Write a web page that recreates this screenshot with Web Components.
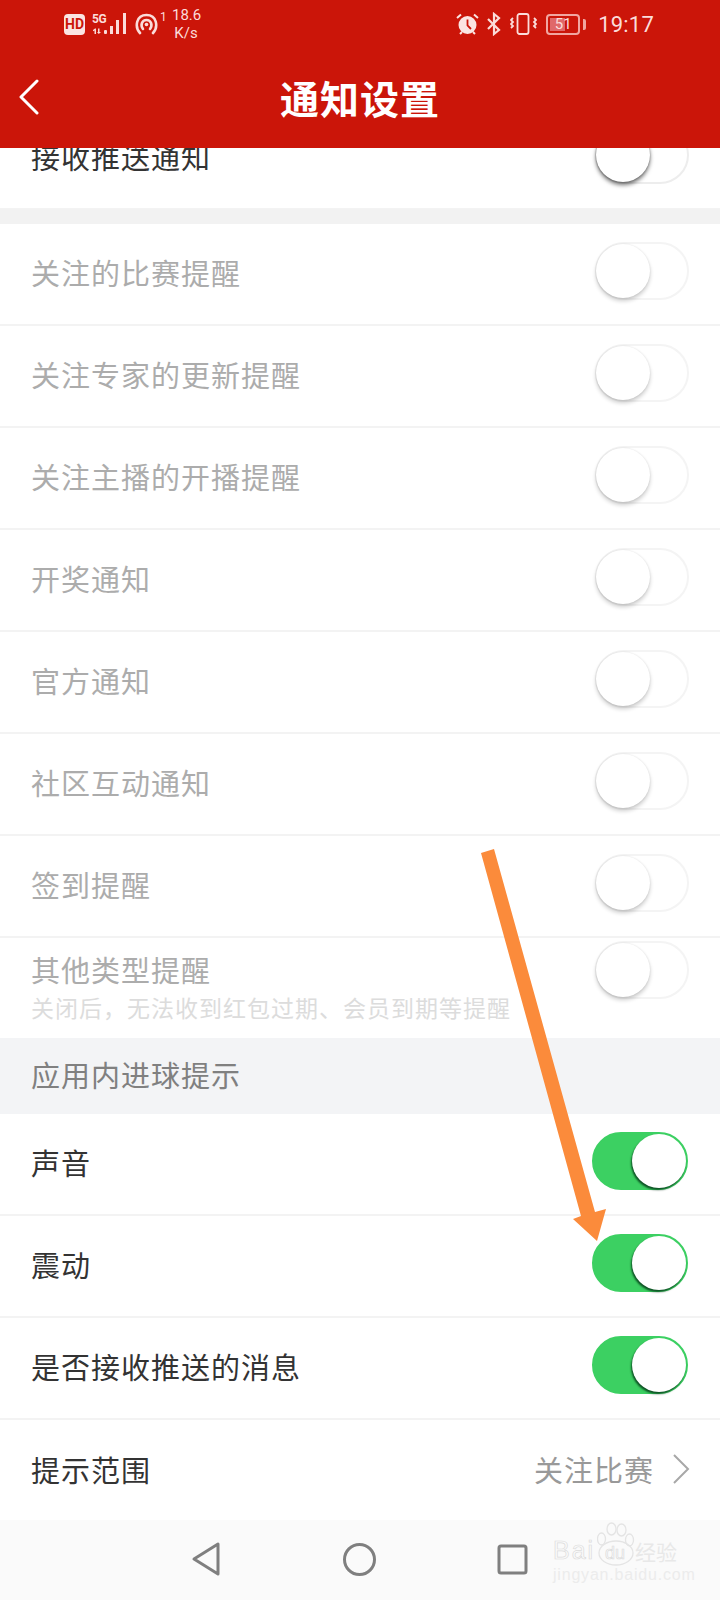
<!DOCTYPE html>
<html lang="zh">
<head>
<meta charset="utf-8">
<title>通知设置</title>
<style>
    html, body {
        margin: 0;
        padding: 0;
        background: #fff;
    }
    body {
        width: 720px;
        height: 1600px;
        overflow: hidden;
        font-family: "Noto Sans CJK SC", "Noto Sans", sans-serif;
    }
</style>
</head>
<body>
<notice-page>
    <status-bar slot="top"></status-bar>
    <app-header slot="top">通知设置</app-header>

    <clip-row>
        <setting-row>接收推送通知<toggle-switch slot="end"></toggle-switch></setting-row>
    </clip-row>
    <gap-bar></gap-bar>
    <setting-row muted>关注的比赛提醒<toggle-switch slot="end" dim></toggle-switch></setting-row>
    <setting-row muted>关注专家的更新提醒<toggle-switch slot="end" dim></toggle-switch></setting-row>
    <setting-row muted>关注主播的开播提醒<toggle-switch slot="end" dim></toggle-switch></setting-row>
    <setting-row muted>开奖通知<toggle-switch slot="end" dim></toggle-switch></setting-row>
    <setting-row muted>官方通知<toggle-switch slot="end" dim></toggle-switch></setting-row>
    <setting-row muted>社区互动通知<toggle-switch slot="end" dim></toggle-switch></setting-row>
    <setting-row muted>签到提醒<toggle-switch slot="end" dim></toggle-switch></setting-row>
    <setting-row muted flat stacked>其他类型提醒<span slot="sub">关闭后，无法收到红包过期、会员到期等提醒</span><toggle-switch slot="end" dim></toggle-switch></setting-row>
    <section-title>应用内进球提示</section-title>
    <setting-row>声音<toggle-switch slot="end" on></toggle-switch></setting-row>
    <setting-row>震动<toggle-switch slot="end" on></toggle-switch></setting-row>
    <setting-row>是否接收推送的消息<toggle-switch slot="end" on></toggle-switch></setting-row>
    <setting-row flat>提示范围<value-link slot="end">关注比赛</value-link></setting-row>

    <nav-bar slot="bottom"></nav-bar>
</notice-page>

<script>
const pageTemplate = document.createElement('template');
pageTemplate.innerHTML = `
    <style>
        :host {
            display: flex;
            flex-direction: column;
            position: relative;
            width: 720px;
            height: 1600px;
            overflow: hidden;
        }
        .top {
            display: block;
            position: relative;
            z-index: 2;
        }
        .list {
            flex: 1;
            min-height: 0;
            display: flex;
            flex-direction: column;
        }
        .arrow {
            position: absolute;
            left: 0;
            top: 0;
            z-index: 3;
            pointer-events: none;
        }
    </style>
    <div class="top"><slot name="top"></slot></div>
    <div class="list"><slot></slot></div>
    <slot name="bottom"></slot>
    <svg class="arrow" width="720" height="1600" viewBox="0 0 720 1600">
        <path d="M481 853 L494 849 L595 1212 L606 1209 L597 1241 L573 1219 L581 1216 Z" fill="#fb8b3b"/>
    </svg>
`;
class NoticePage extends HTMLElement {
    connectedCallback() {
        this.attachShadow({mode: 'open'}).appendChild(pageTemplate.content.cloneNode(true));
    }
}

const statusTemplate = document.createElement('template');
statusTemplate.innerHTML = `
    <style>
        :host {
            display: flex;
            align-items: center;
            height: 48px;
            padding-left: 64px;
            box-sizing: border-box;
            width: 720px;
            background: #cb1509;
            color: #fbdcda;
            font-family: "Roboto", "Noto Sans", sans-serif;
        }
        svg {
            display: block;
            flex: none;
        }
        .hd {
            width: 21px;
            height: 21px;
            background: #fbe4e2;
            color: #cb1509;
            border-radius: 4px;
            font: 700 14px/21px "Roboto", sans-serif;
            text-align: center;
            margin-right: 7px;
        }
        .sig {
            position: relative;
            width: 35px;
            height: 22px;
            margin-right: 8px;
        }
        .sig b {
            position: absolute;
            left: 0;
            top: 0;
            font: 700 12px/12px "Roboto", sans-serif;
            letter-spacing: -.5px;
        }
        .one {
            font-size: 12px;
            line-height: 12px;
            margin: -14px 8px 0 2px;
            width: 4px;
        }
        .speed {
            font-size: 15px;
            line-height: 18px;
            text-align: center;
            width: 28px;
        }
        .right {
            margin-left: auto;
            display: flex;
            align-items: center;
            padding-right: 66px;
        }
        .batt {
            position: relative;
            width: 34px;
            height: 21px;
            box-sizing: border-box;
            border: 2px solid #f1a6a1;
            border-radius: 4px;
            margin: 0 3px 0 9px;
            text-align: center;
            font-size: 15px;
            line-height: 17px;
            overflow: hidden;
        }
        .batt i {
            position: absolute;
            left: 2px;
            top: 2px;
            bottom: 2px;
            width: 15px;
            background: #e0686a;
        }
        .batt span {
            position: relative;
        }
        .nub {
            width: 3px;
            height: 11px;
            background: #f1a6a1;
            border-radius: 0 2px 2px 0;
            margin-right: 12px;
        }
        .time {
            font-size: 22px;
            letter-spacing: .2px;
        }
    </style>
    <div class="hd">HD</div>
    <div class="sig">
        <b>5G</b>
        <svg width="35" height="22" viewBox="0 0 35 22" fill="#fbdcda">
            <path d="M1 17l2-1.500h1V21H2.500V17.500L1 18.200zM6 15.500h1.500V19H9l-2.200 2L5 19h1z"/>
            <rect x="12" y="17" width="3" height="4" rx="1"/>
            <rect x="18" y="13" width="3" height="8"/>
            <rect x="24" y="7" width="3" height="14"/>
            <rect x="31" y="0" width="3" height="21"/>
        </svg>
    </div>
    <svg width="23" height="22" viewBox="0 0 23 22" fill="none" stroke="#fbdcda" stroke-width="2.600" stroke-linecap="round">
        <path d="M5 20C-.5 14 1 2 11.500 2S23.500 14 18 20"/>
        <path d="M8 16C5 12 7 7 11.500 7S18 12 15 16"/>
        <circle cx="11.500" cy="11.500" r="1.800" fill="#fbdcda" stroke="none"/>
    </svg>
    <span class="one">1</span>
    <div class="speed">18.6<br>K/s</div>
    <div class="right">
        <svg width="23" height="22" viewBox="0 0 23 22">
            <circle cx="11.500" cy="12" r="9" fill="#fbe4e2"/>
            <path d="M11.500 6.500V12.500L15 16" fill="none" stroke="#cb1509" stroke-width="1.800"/>
            <path d="M1 5L5 1.500M22 5L18 1.500M4 21l2-2M19 21l-2-2" stroke="#fbe4e2" stroke-width="2"/>
        </svg>
        <svg width="16" height="24" viewBox="0 0 16 24" style="margin-left:7px" fill="none" stroke="#fbdcda" stroke-width="2.200">
            <path d="M2 7L13 18L8 22V2L13 6L2 17"/>
        </svg>
        <svg width="27" height="22" viewBox="0 0 27 22" style="margin-left:8px" fill="none" stroke="#fbdcda" stroke-width="1.800">
            <rect x="7.500" y="1" width="11" height="20" rx="2"/>
            <path d="M3 5l-2 2 2 2-2 2 2 2-2 2M24 5l2 2-2 2 2 2-2 2 2 2"/>
        </svg>
        <div class="batt"><i></i><span>51</span></div>
        <div class="nub"></div>
        <div class="time">19:17</div>
    </div>
`;
class StatusBar extends HTMLElement {
    connectedCallback() {
        this.attachShadow({mode: 'open'}).appendChild(statusTemplate.content.cloneNode(true));
    }
}

const headerTemplate = document.createElement('template');
headerTemplate.innerHTML = `
    <style>
        :host {
            display: flex;
            align-items: center;
            justify-content: center;
            position: relative;
            height: 100px;
            box-sizing: border-box;
            padding-bottom: 3px;
            width: 720px;
            background: #cb1509;
            color: #fff;
            font-size: 39px;
            font-weight: 700;
            letter-spacing: 1px;
        }
        svg {
            position: absolute;
            left: 18px;
            top: 31px;
        }
    </style>
    <svg width="22" height="36" viewBox="0 0 22 36" fill="none" stroke="#fff" stroke-width="3" stroke-linecap="round" stroke-linejoin="round">
        <path d="M19 2L3 18L19 34"/>
    </svg>
    <div><slot></slot></div>
`;
class AppHeader extends HTMLElement {
    connectedCallback() {
        this.attachShadow({mode: 'open'}).appendChild(headerTemplate.content.cloneNode(true));
    }
}

const rowTemplate = document.createElement('template');
rowTemplate.innerHTML = `
    <style>
        :host {
            display: flex;
            flex: none;
            align-items: center;
            justify-content: space-between;
            height: 102px;
            box-sizing: border-box;
            width: 720px;
            padding: 0 31px 0 31px;
            background: #fff;
            border-bottom: 2px solid #f3f3f3;
            color: #333;
            font-size: 29px;
            letter-spacing: 1px;
        }
        :host([flat]) {
            border-bottom: 0;
        }
        :host([muted]) {
            color: #acacac;
        }
        .text {
            display: flex;
            flex-direction: column;
            padding-bottom: 4px;
        }
        :host([stacked]) .text {
            padding-bottom: 10px;
        }
        :host([stacked]) ::slotted(toggle-switch) {
            margin-bottom: 38px;
        }
        ::slotted([slot="sub"]) {
            color: #dcdcdc;
            font-size: 23px;
            line-height: 26px;
            letter-spacing: 1px;
            margin-top: 4px;
        }
    </style>
    <div class="text">
        <div><slot></slot></div>
        <slot name="sub"></slot>
    </div>
    <slot name="end"></slot>
`;
class SettingRow extends HTMLElement {
    connectedCallback() {
        this.attachShadow({mode: 'open'}).appendChild(rowTemplate.content.cloneNode(true));
    }
}

const clipTemplate = document.createElement('template');
clipTemplate.innerHTML = `
    <style>
        :host {
            display: block;
            flex: none;
            height: 101px;
            overflow: hidden;
            margin-top: -40px;
        }
    </style>
    <slot></slot>
`;
class ClipRow extends HTMLElement {
    connectedCallback() {
        this.attachShadow({mode: 'open'}).appendChild(clipTemplate.content.cloneNode(true));
    }
}

const gapTemplate = document.createElement('template');
gapTemplate.innerHTML = `
    <style>
        :host {
            display: block;
            flex: none;
            height: 15px;
            background: #f2f2f2;
        }
    </style>
`;
class GapBar extends HTMLElement {
    connectedCallback() {
        this.attachShadow({mode: 'open'}).appendChild(gapTemplate.content.cloneNode(true));
    }
}

const sectionTemplate = document.createElement('template');
sectionTemplate.innerHTML = `
    <style>
        :host {
            display: flex;
            flex: none;
            align-items: center;
            height: 76px;
            margin-top: -2px;
            position: relative;
            box-sizing: border-box;
            padding: 0 0 4px 31px;
            background: #f3f4f6;
            color: #808080;
            font-size: 29px;
            letter-spacing: 1px;
        }
    </style>
    <slot></slot>
`;
class SectionTitle extends HTMLElement {
    connectedCallback() {
        this.attachShadow({mode: 'open'}).appendChild(sectionTemplate.content.cloneNode(true));
    }
}

const toggleTemplate = document.createElement('template');
toggleTemplate.innerHTML = `
    <style>
        :host {
            display: block;
            position: relative;
            flex: none;
            width: 94px;
            height: 58px;
            margin-bottom: 6px;
            box-sizing: border-box;
            border: 2px solid #ededed;
            border-radius: 29px;
            background: #fff;
        }
        :host([dim]) {
            border-color: #f4f4f4;
        }
        :host([on]) {
            width: 96px;
            margin-right: 1px;
            border-color: #3cd062;
            background: #3cd062;
        }
        .knob {
            position: absolute;
            left: -1px;
            top: 0;
            width: 54px;
            height: 54px;
            border-radius: 50%;
            background: #fff;
            box-shadow: 0 3px 4px rgba(0, 0, 0, .55), 0 0 2px rgba(0, 0, 0, .3);
        }
        :host([dim]) .knob {
            box-shadow: 0 3px 4px rgba(0, 0, 0, .2), 0 0 2px rgba(0, 0, 0, .1);
        }
        :host([on]) .knob {
            left: auto;
            right: 0;
            box-shadow: -1px 2px 2px rgba(0, 50, 20, .8);
        }
    </style>
    <div class="knob"></div>
`;
class ToggleSwitch extends HTMLElement {
    connectedCallback() {
        this.attachShadow({mode: 'open'}).appendChild(toggleTemplate.content.cloneNode(true));
    }
}

const valueTemplate = document.createElement('template');
valueTemplate.innerHTML = `
    <style>
        :host {
            display: flex;
            align-items: center;
            gap: 19px;
            color: #999;
            font-size: 29px;
            margin: 0 -1px 4px 0;
        }
        svg {
            display: block;
        }
    </style>
    <slot></slot>
    <svg width="17" height="30" viewBox="0 0 17 30" fill="none" stroke="#a8a8a8" stroke-width="2">
        <path d="M1 1L15 15L1 29"/>
    </svg>
`;
class ValueLink extends HTMLElement {
    connectedCallback() {
        this.attachShadow({mode: 'open'}).appendChild(valueTemplate.content.cloneNode(true));
    }
}

const navTemplate = document.createElement('template');
navTemplate.innerHTML = `
    <style>
        :host {
            display: block;
            position: relative;
            flex: none;
            height: 80px;
            background: #fafafa;
        }
        .keys {
            display: flex;
            align-items: center;
            gap: 121px;
            height: 80px;
            padding: 0 0 2px 191px;
            box-sizing: border-box;
        }
        svg {
            display: block;
        }
        .mark {
            position: absolute;
            left: 553px;
            top: 0;
            width: 130px;
            height: 64px;
            color: #e4e4e4;
            font-family: "Liberation Sans", sans-serif;
        }
        .mark svg {
            position: absolute;
            left: 44px;
            top: 2px;
        }
        .bai {
            position: absolute;
            left: 0;
            top: 18px;
            font-size: 25px;
            line-height: 25px;
            letter-spacing: 2px;
            color: transparent;
            -webkit-text-stroke: .7px #dcdcdc;
        }
        .du {
            position: absolute;
            left: 52px;
            top: 24px;
            font-size: 18px;
            line-height: 18px;
            color: transparent;
            -webkit-text-stroke: .7px #dcdcdc;
        }
        .jy {
            position: absolute;
            left: 82px;
            top: 18px;
            font: 21px/26px "Noto Sans CJK SC", sans-serif;
            color: #e8e8e8;
        }
        .url {
            position: absolute;
            left: 0;
            top: 47px;
            font-size: 16px;
            line-height: 16px;
            letter-spacing: .8px;
            white-space: nowrap;
            color: #ececec;
        }
    </style>
    <div class="keys">
        <svg width="30" height="36" viewBox="0 0 30 36" fill="none" stroke="#7f7f7f" stroke-width="3" stroke-linejoin="round">
            <path d="M27 3V33L3 18Z"/>
        </svg>
        <svg width="35" height="35" viewBox="0 0 35 35" fill="none" stroke="#7f7f7f" stroke-width="3">
            <circle cx="17.500" cy="17.500" r="15"/>
        </svg>
        <svg width="31" height="31" viewBox="0 0 31 31" fill="none" stroke="#7f7f7f" stroke-width="3" stroke-linejoin="round" style="margin-left:-1px">
            <rect x="2" y="2" width="27" height="27" rx="2"/>
        </svg>
    </div>
    <div class="mark">
        <svg width="40" height="46" viewBox="0 0 40 46" fill="none" stroke="#e4e4e4" stroke-width="1.300">
            <ellipse cx="4.500" cy="17" rx="4" ry="6"/>
            <ellipse cx="14.500" cy="7" rx="4.500" ry="6"/>
            <ellipse cx="24.500" cy="8" rx="4.500" ry="6"/>
            <ellipse cx="32.500" cy="18" rx="4" ry="6"/>
            <ellipse cx="19" cy="31" rx="17" ry="12"/>
        </svg>
        <div class="bai">Bai</div>
        <div class="du">du</div>
        <div class="jy">经验</div>
        <div class="url">jingyan.baidu.com</div>
    </div>
`;
class NavBar extends HTMLElement {
    connectedCallback() {
        this.attachShadow({mode: 'open'}).appendChild(navTemplate.content.cloneNode(true));
    }
}

customElements.define('notice-page', NoticePage);
customElements.define('status-bar', StatusBar);
customElements.define('app-header', AppHeader);
customElements.define('setting-row', SettingRow);
customElements.define('clip-row', ClipRow);
customElements.define('gap-bar', GapBar);
customElements.define('section-title', SectionTitle);
customElements.define('toggle-switch', ToggleSwitch);
customElements.define('value-link', ValueLink);
customElements.define('nav-bar', NavBar);
</script>
</body>
</html>
